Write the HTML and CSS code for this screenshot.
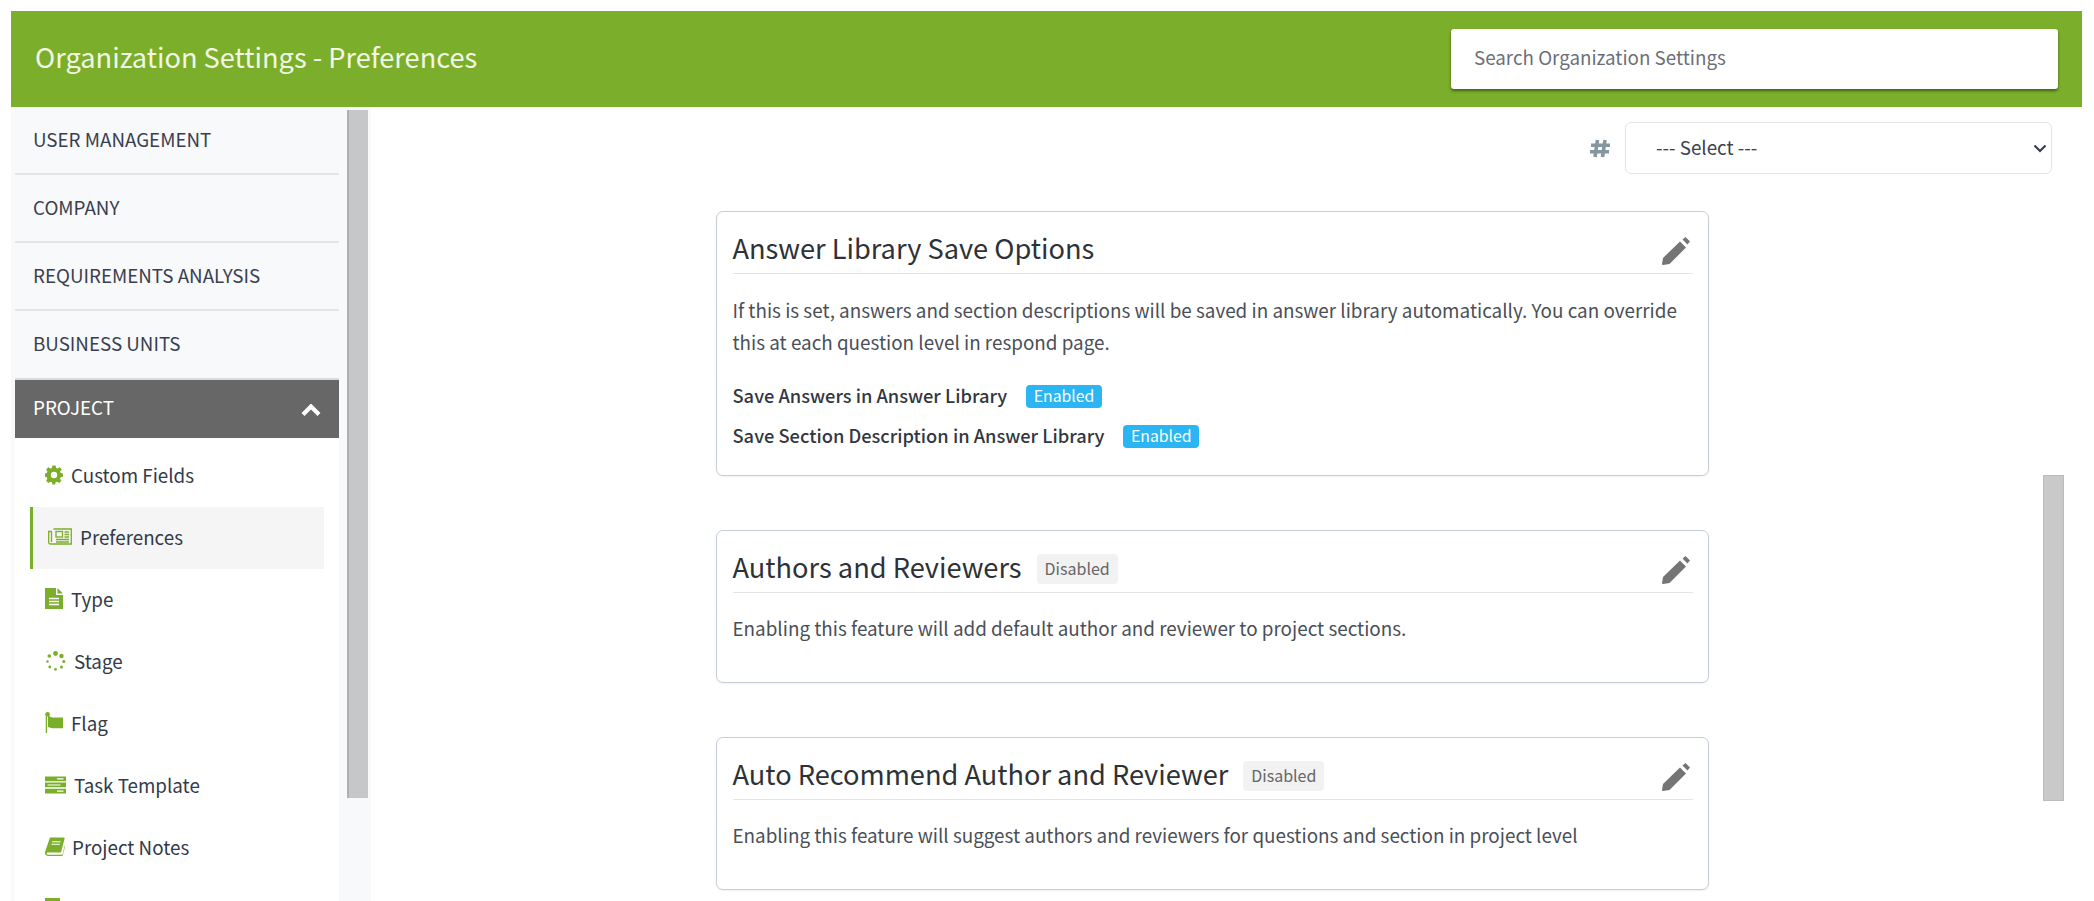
FILE: index.html
```html
<!DOCTYPE html>
<html lang="en">
<head>
<meta charset="utf-8">
<title>Organization Settings - Preferences</title>
<link rel="stylesheet" href="styles.css">
</head>
<body>
<div class="app">
  <header class="topbar">
    <h1 class="topbar-title">Organization Settings - Preferences</h1>
    <input class="search" type="text" placeholder="Search Organization Settings">
  </header>
  <div class="layout">
    <aside class="sidebar">
      <nav class="nav">
        <a class="nav-group">USER MANAGEMENT</a>
        <a class="nav-group">COMPANY</a>
        <a class="nav-group">REQUIREMENTS ANALYSIS</a>
        <a class="nav-group">BUSINESS UNITS</a>
        <a class="nav-open">PROJECT
          <svg class="chev" viewBox="0 0 20 13"><path d="M2 10.500 10 2.500l8 8" fill="none" stroke="#fff" stroke-width="4.200"/></svg>
        </a>
        <div class="sub">
          <a class="sub-item">
            <svg class="ico" viewBox="0 0 18 18"><path fill="#7bae2a" fill-rule="evenodd" d="M7.400 0h3.200l.5 2.400 1.500.6 2.100-1.300 2.200 2.200L15.100 6l.6 1.500 2.300.5v3.200l-2.300.5-.6 1.500 1.300 2.100-2.200 2.200-2.100-1.300-1.500.6-.5 2.200H7.400l-.5-2.200-1.500-.6-2.100 1.300-2.200-2.200 1.300-2.100-.6-1.500L0 11.200V8l1.800-.5.6-1.500L1.100 3.900l2.200-2.200 2.100 1.300 1.500-.6zM9 6.300a3.200 3.200 0 1 0 0 6.400 3.200 3.200 0 0 0 0-6.400z"/></svg>
            Custom Fields</a>
          <a class="sub-item sub-active">
            <svg class="ico ico-news" viewBox="0 0 24 17"><g fill="none" stroke="#7bae2a" stroke-width="1.300"><path d="M5.500 1h17.800v15H2.500A1.800 1.800 0 0 1 .7 14.200V3.500h3"/><path d="M3.500 3.500v10.500"/><rect x="8" y="3.500" width="6.500" height="5.500"/><path d="M16.500 4h4.500M16.500 6.500h4.500M16.500 9h4.500M8 11.500h13M8 14h13"/></g></svg>
            Preferences</a>
          <a class="sub-item">
            <svg class="ico" viewBox="0 0 18 21"><path fill="#7bae2a" d="M0 0h11v7h7v14H0z"/><path fill="#7bae2a" d="M12.500 0 18 5.500h-5.500z"/><path stroke="#fff" stroke-width="1.400" d="M4 10.500h10M4 13.500h10M4 16.500h10"/></svg>
            Type</a>
          <a class="sub-item item-wide">
            <svg class="ico ico-wide" viewBox="0 0 20 20" fill="#7bae2a"><circle cx="10" cy="2.500" r="2.400"/><circle cx="16" cy="5" r="2.200"/><circle cx="18.300" cy="10.500" r="1.500"/><circle cx="16" cy="16" r="1.500"/><circle cx="10" cy="18.300" r="1.400"/><circle cx="4.300" cy="16" r="1.400"/><circle cx="2" cy="10.500" r="1.200"/><circle cx="3.800" cy="5" r="1.800"/></svg>
            Stage</a>
          <a class="sub-item">
            <svg class="ico" viewBox="0 0 18 21"><path fill="#7bae2a" d="M.7 2.500h1.400V21H.7z"/><circle cx="2.600" cy="2.300" r="2.300" fill="#7bae2a"/><path fill="#7bae2a" d="M3 3.200c2.500 2 4.500 2.300 6.500 2.300H18v10.800H9C6.500 16.300 4.500 15.500 3 15z"/></svg>
            Flag</a>
          <a class="sub-item item-wide">
            <svg class="ico ico-wide" viewBox="0 0 21 17"><path fill="#7bae2a" d="M0 0h21v4.700H0zM0 6.100h21v4.700H0zM0 12.300h21V17H0z"/><path stroke="#fff" stroke-width="1.200" d="M12 2.400h6.500M2.500 8.500h13M12 14.700h6.500"/></svg>
            Task Template</a>
          <a class="sub-item item-notes">
            <svg class="ico ico-book" viewBox="0 0 20 19"><path fill="#7bae2a" d="M5 .5h13.500c1 0 1.200.6 1 1.500L16 15.500H3c-1 0-1.400.9-1.200 1.400.2.500.6.800 1.200.8h13.800c.4 0 .7-.2.900-.7l2-8.500.3 1-2.200 8.700c-.2.600-.6.800-1.200.8H3.200C1 18.800-.3 17-.2 15.500z"/><path stroke="#fff" stroke-width="1.100" d="M7 4.700h8.500M6.400 7.300h8.500"/></svg>
            Project Notes</a>
          <a class="sub-item">
            <svg class="ico" viewBox="0 0 18 21"><path fill="none" stroke="#7bae2a" stroke-width="3" d="M1.500 1.500h12v18h-12z"/></svg>
            Question Tags</a>
        </div>
      </nav>
      <div class="track"><div class="thumb"></div></div>
    </aside>
    <main class="main">
      <div class="filter">
        <svg class="hash" viewBox="0 0 20 19" aria-label="hash"><path fill="none" stroke="#8596a0" stroke-width="3.600" d="M7.500 1 5 18M15 1l-2.500 17M1 6.300h19M0 12.700h19"/></svg>
        <div class="select-box">
          <span>--- Select ---</span>
          <svg class="select-arrow" viewBox="0 0 14 9"><path d="M1.500 1.500 7 7l5.500-5.500" fill="none" stroke="#343a50" stroke-width="2"/></svg>
        </div>
      </div>
      <section class="card card-first">
        <div class="card-head">
          <h2 class="card-title">Answer Library Save Options</h2>
          <svg class="pencil" viewBox="0 0 28 28"><path fill="#757575" d="M18 4.500 24 10.500 7.500 27 1 28Q0 28 0 27L1 21zM20.500 2.500 23.500 0 28 4.500 25.500 7.500z"/></svg>
        </div>
        <p class="card-text">If this is set, answers and section descriptions will be saved in answer library automatically. You can override this at each question level in respond page.</p>
        <div class="option"><b class="option-label">Save Answers in Answer Library</b><span class="badge-on">Enabled</span></div>
        <div class="option"><b class="option-label">Save Section Description in Answer Library</b><span class="badge-on">Enabled</span></div>
      </section>
      <section class="card card-short">
        <div class="card-head">
          <h2 class="card-title">Authors and Reviewers</h2><span class="badge-off">Disabled</span>
          <svg class="pencil" viewBox="0 0 28 28"><path fill="#757575" d="M18 4.500 24 10.500 7.500 27 1 28Q0 28 0 27L1 21zM20.500 2.500 23.500 0 28 4.500 25.500 7.500z"/></svg>
        </div>
        <p class="card-text">Enabling this feature will add default author and reviewer to project sections.</p>
      </section>
      <section class="card card-short">
        <div class="card-head">
          <h2 class="card-title">Auto Recommend Author and Reviewer</h2><span class="badge-off">Disabled</span>
          <svg class="pencil" viewBox="0 0 28 28"><path fill="#757575" d="M18 4.500 24 10.500 7.500 27 1 28Q0 28 0 27L1 21zM20.500 2.500 23.500 0 28 4.500 25.500 7.500z"/></svg>
        </div>
        <p class="card-text">Enabling this feature will suggest authors and reviewers for questions and section in project level</p>
      </section>
      <div class="main-thumb"></div>
    </main>
  </div>
</div>
</body>
</html>
```
FILE: styles.css
```css
* { box-sizing: border-box; }
html, body { margin: 0; height: 901px; overflow: hidden; background: #fff; }
body { font-family: "Noto Sans CJK SC", "Noto Sans", sans-serif; color: #3c4250; }
.app { padding: 11px 12px 0 11px; height: 901px; display: flex; flex-direction: column; overflow: hidden; }

.topbar { flex: none; height: 96px; background: #7bae2a; display: flex; align-items: center; justify-content: space-between; padding: 0 24px 0 24px; }
.topbar-title { margin: 0 0 6px; font-size: 27.2px; font-weight: 400; line-height: 40px; color: #f1f7e4; }
.search { width: 607px; height: 60px; border: 0; border-radius: 3px; padding: 0 23px 5px; font: 400 18.800px/28px "Noto Sans CJK SC", sans-serif; background: #fff; box-shadow: 0 2px 3px rgba(0,0,0,.45); outline: none; }
.search::placeholder { color: #6b7078; opacity: 1; }

.layout { flex: 1; display: flex; min-height: 0; }
.sidebar { flex: none; width: 360px; display: flex; background: #f8f9fb; overflow: hidden; }
.nav { width: 324px; margin-left: 4px; flex: none; display: flex; flex-direction: column; }
.nav-group { height: 68px; flex: none; display: flex; align-items: center; padding: 0 0 3px 18px; font-size: 18.800px; line-height: 28px; color: #3a3f50; border-bottom: 2px solid #e2e4e9; }
.nav-group:nth-child(4) { height: 69px; border-bottom-color: #d9dbdf; }
.nav-open { height: 58px; flex: none; display: flex; align-items: center; justify-content: space-between; padding: 0 18px 5px 18px; font-size: 18.800px; line-height: 28px; color: #fff; background: #676767; }
.chev { width: 20px; height: 13px; margin-top: 7px; }
.sub { flex: 1; background: #fff; padding: 7px 15px 0; }
.sub-item { height: 62px; display: flex; align-items: center; padding: 0 0 3px 15px; font-size: 18.800px; line-height: 28px; color: #333a4a; gap: 8px; }
.sub-active { background: #f5f5f5; border-left: 3px solid #7bae2a; padding-left: 15px; }
.ico { width: 18px; height: 21px; flex: none; }
.ico-news { width: 24px; height: 17px; }
.ico-wide { width: 21px; height: 20px; }
.ico-book { width: 20px; height: 19px; }
.item-notes { gap: 7px; }
.track { flex: none; width: 21px; margin-left: 8px; padding-top: 3px; }
.thumb { height: 688px; background: #c6c7c9; border-left: 2px solid #aeafb1; }

.main { flex: 1; position: relative; overflow: hidden; padding-left: 345px; min-width: 0; }
.filter { height: 52px; margin-top: 15px; display: flex; justify-content: flex-end; align-items: center; margin-right: 30px; gap: 15px; }
.hash { width: 20px; height: 19px; flex: none; }
.select-box { width: 427px; height: 52px; border: 1.500px solid #dfe5e8; border-radius: 6px; display: flex; align-items: center; justify-content: space-between; padding: 0 3px 3px 30px; font-size: 18.800px; line-height: 28px; color: #3c4250; }
.select-arrow { width: 14px; height: 9px; margin-right: 1px; margin-top: 3px; }

.card { width: 993px; border: 1.500px solid #c5ced6; border-radius: 7px; padding: 0 15.5px; box-shadow: 0 1px 2px rgba(0,0,0,.06); background: #fff; }
.card-first { height: 265px; margin-top: 37px; }
.card-short { height: 153px; margin-top: 54px; }
.card-head { height: 62px; display: flex; align-items: center; border-bottom: 1.500px solid #e1e4e7; padding-top: 9px; }
.card-title { margin: 0; font-size: 27.2px; font-weight: 400; line-height: 40px; color: #2e3238; }
.pencil { width: 28px; height: 28px; margin-left: auto; margin-right: 3px; margin-top: 7px; }
.card-text { margin: 20px 0 0; font-size: 18.85px; line-height: 32px; color: #4a4f58; }
.card-short .card-text { margin-top: 19px; }
.option { display: flex; align-items: center; height: 40px; }
.card-text + .option { margin-top: 17px; }
.option-label { font-size: 18.300px; font-weight: 500; line-height: 28px; color: #33373f; }
.badge-on { margin-left: 19px; margin-top: 2px; height: 23px; padding: 0 7.5px; border-radius: 4px; background: #2bb5f3; color: #fff; font-size: 15.8px; line-height: 21px; }
.badge-off { margin-left: 15px; margin-top: 5px; height: 30px; padding: 0 8px; border-radius: 4px; background: #f2f2f2; color: #666; font-size: 16px; line-height: 28px; }
.main-thumb { position: absolute; left: 1672px; top: 368px; width: 21px; height: 326px; background: #c9c9c9; border: 1px solid #bbb; }
```
